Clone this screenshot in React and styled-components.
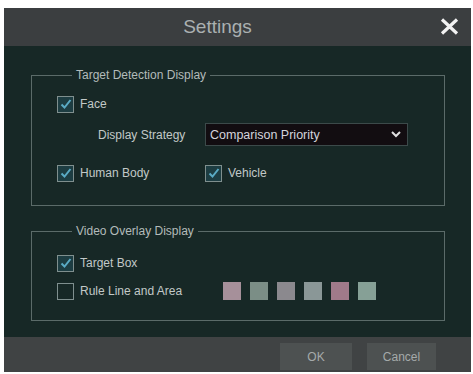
import styled, { createGlobalStyle } from 'styled-components'

const GlobalStyle = createGlobalStyle`
  body {
    margin: 0;
    background: #fff;
    font-family: "Liberation Sans", Arial, sans-serif;
  }
`

const Dialog = styled.div`
  width: 467px;
  height: 364px;
  margin: 8px 0 0 4px;
  display: flex;
  flex-direction: column;
  background: #172826;
`

const TitleBar = styled.div`
  height: 38px;
  display: flex;
  align-items: center;
  justify-content: center;
  padding-right: 40px;
  position: relative;
  background: #3b3e40;
  color: #aab0b1;
  font-size: 19px;
`

const Close = styled.button`
  position: absolute;
  right: 12px;
  top: 10px;
  width: 19px;
  height: 17px;
  padding: 0;
  border: 0;
  background: none;
  display: flex;
`

const Body = styled.div`
  flex: 1;
  padding: 22px 26px 0 27px;
  display: flex;
  flex-direction: column;
  gap: 18px;
`

const Section = styled.fieldset`
  margin: 0;
  padding: ${p => p.$pad};
  border: 1px solid #5b6b69;
  height: ${p => p.$h}px;
  box-sizing: border-box;
`

const Legend = styled.legend`
  margin-left: 15px;
  padding: 0 4px;
  font-size: 12px;
  line-height: 14px;
  color: #b3bbba;
`

const Row = styled.div`
  display: flex;
  align-items: center;
  height: 20px;
  margin-top: ${p => p.$mt || 0}px;
`

const Item = styled.label`
  display: flex;
  align-items: center;
  width: ${p => p.$w || 'auto'};
  font-size: 12px;
  color: #c2c9c8;
  gap: 6px;
`

const Box = styled.span`
  width: 17px;
  height: 17px;
  box-sizing: border-box;
  border: 1px solid #7f8f8e;
  background: ${p => (p.$on ? '#1d3d42' : 'transparent')};
  display: flex;
  align-items: center;
  justify-content: center;
`

const StrategyRow = styled.div`
  display: flex;
  align-items: center;
  margin: 9px 0 0 41px;
  gap: 10px;
`

const Label = styled.span`
  font-size: 12px;
  color: #c2c9c8;
  width: 97px;
`

const Select = styled.div`
  width: 203px;
  height: 23px;
  box-sizing: border-box;
  border: 1px solid #3c4a4a;
  background: #120d11;
  color: #d4d4dc;
  font-size: 12.5px;
  display: flex;
  align-items: center;
  justify-content: space-between;
  padding: 0 6px 0 4px;
`

const Swatches = styled.div`
  display: flex;
  gap: 9px;
  margin-left: 30px;
`

const Swatch = styled.span`
  width: 18px;
  height: 18px;
  background: ${p => p.$c};
`

const Footer = styled.div`
  height: 35px;
  display: flex;
  justify-content: flex-end;
  align-items: flex-start;
  gap: 15px;
  padding: 6px 35px 0 0;
  box-sizing: border-box;
  background: #404344;
`

const Button = styled.button`
  width: ${p => p.$w}px;
  height: 27px;
  border: 0;
  background: #4d5151;
  color: #a5aaaa;
  font-family: inherit;
  font-size: 12px;
`

const Check = ({ on }) => (
  <Box $on={on}>
    {on && (
      <svg width="12" height="12" viewBox="0 0 12 12">
        <path d="M1.5 6.5 L4.5 9.5 L10.5 2" fill="none" stroke="#5aaac4" strokeWidth="2" />
      </svg>
    )}
  </Box>
)

const swatchColors = ['#a6909a', '#7b8e86', '#8b898e', '#8a9797', '#a07a8a', '#86a096']

export default function App() {
  return (
    <>
      <GlobalStyle />
      <Dialog>
        <TitleBar>
          Settings
          <Close>
            <svg width="19" height="17" viewBox="0 0 19 17">
              <path d="M2 1.5 L17 15.5 M17 1.5 L2 15.5" stroke="#f2f2f2" strokeWidth="3.2" />
            </svg>
          </Close>
        </TitleBar>
        <Body>
          <Section $h={138} $pad="12px 25px 0">
            <Legend>Target Detection Display</Legend>
            <Row>
              <Item><Check on />Face</Item>
            </Row>
            <StrategyRow>
              <Label>Display Strategy</Label>
              <Select>
                Comparison Priority
                <svg width="10" height="7" viewBox="0 0 10 7">
                  <path d="M1 1 L5 5 L9 1" fill="none" stroke="#e0e0e0" strokeWidth="2" />
                </svg>
              </Select>
            </StrategyRow>
            <Row $mt={17}>
              <Item $w="148px"><Check on />Human Body</Item>
              <Item><Check on />Vehicle</Item>
            </Row>
          </Section>
          <Section $h={97} $pad="15px 25px 0">
            <Legend>Video Overlay Display</Legend>
            <Row>
              <Item><Check on />Target Box</Item>
            </Row>
            <Row $mt={8}>
              <Item $w="136px"><Check />Rule Line and Area</Item>
              <Swatches>
                {swatchColors.map(c => <Swatch key={c} $c={c} />)}
              </Swatches>
            </Row>
          </Section>
        </Body>
        <Footer>
          <Button $w={72}>OK</Button>
          <Button $w={69}>Cancel</Button>
        </Footer>
      </Dialog>
    </>
  )
}
